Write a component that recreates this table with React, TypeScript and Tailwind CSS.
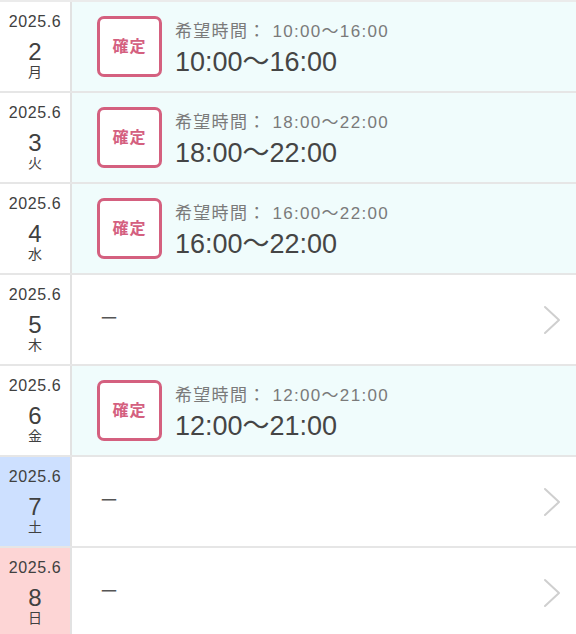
interface Shift {
  day: number;
  youbi: string;
  kind?: "sat" | "sun";
  time?: string;
}

const shifts: Shift[] = [
  { day: 2, youbi: "月", time: "10:00〜16:00" },
  { day: 3, youbi: "火", time: "18:00〜22:00" },
  { day: 4, youbi: "水", time: "16:00〜22:00" },
  { day: 5, youbi: "木" },
  { day: 6, youbi: "金", time: "12:00〜21:00" },
  { day: 7, youbi: "土", kind: "sat" },
  { day: 8, youbi: "日", kind: "sun" },
];

const font = {
  fontFamily: '"Liberation Sans", "Noto Sans CJK JP", sans-serif',
};

const Chevron = () => (
  <svg width="19" height="30" viewBox="0 0 19 30" fill="none">
    <polyline points="2,2 16,15 2,28" stroke="#cfcfcf" strokeWidth="2" strokeLinecap="round" strokeLinejoin="round" />
  </svg>
);

const App = () => {
  return (
    <main className="w-[576px] h-[634px] overflow-hidden bg-white border-t-2 border-[#ebebeb]" style={font}>
      {shifts.map((s) => {
        const dateBg =
          s.kind === "sat" ? "bg-[#cde0ff]" : s.kind === "sun" ? "bg-[#fdd5d5]" : "bg-white";
        return (
          <div key={s.day} className="flex h-[91px] border-b-2 border-[#e6e6e6]">
            {/* 日付 */}
            <div
              className={`w-[72px] shrink-0 flex flex-col items-center pt-[10px] text-[#404040] border-r-2 border-[#e2e2e2] ${dateBg}`}
            >
              <span className="text-[16px] leading-[20px] tracking-[0.6px]">2025.6</span>
              <span className="text-[24px] leading-[22px] mt-[9px]">{s.day}</span>
              <span className="text-[14px] leading-[18px]">{s.youbi}</span>
            </div>

            {s.time ? (
              <div className="flex-1 flex items-center bg-[#f0fcfc] pl-[25px]">
                <div className="w-[65px] h-[61px] border-[3px] border-[#d4607f] rounded-[7px] flex items-center justify-center bg-white">
                  <span className="text-[16px] font-bold text-[#d4607f] tracking-[1px]">確定</span>
                </div>
                <div className="ml-[13px] mt-[6px] flex flex-col">
                  <span className="text-[17px] leading-[22px] tracking-[1.3px] text-[#7a7a7a]">希望時間： {s.time}</span>
                  <span className="text-[27px] leading-[32px] text-[#454545] mt-[3px]">{s.time}</span>
                </div>
              </div>
            ) : (
              <div className="flex-1 flex items-center justify-between pl-[28px] pr-[14px]">
                <span className="text-[18px] text-[#555]">ー</span>
                <Chevron />
              </div>
            )}
          </div>
        );
      })}
    </main>
  );
};

export default App;
